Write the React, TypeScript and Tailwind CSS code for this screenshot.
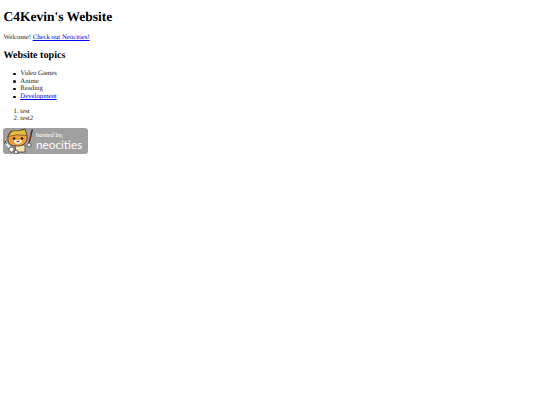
function NeocitiesBadge() {
  return (
    <a href="#" className="flex w-[85px] h-[25.5px] rounded-[3px] bg-[#a0a0a0] overflow-hidden">
      <svg width="33" height="26" viewBox="0 0 33 26" className="shrink-0">
        {/* paint brush */}
        <path d="M26 15 L28.5 5" stroke="#7a2a1c" strokeWidth="1.6" fill="none" />
        <path d="M28 6 L29.5 1.5" stroke="#333" strokeWidth="1.5" fill="none" />
        <circle cx="26" cy="17" r="2" fill="#f4f0e0" stroke="#333" strokeWidth="0.7" />
        {/* body */}
        <path d="M12 17 L22 17 L22 24 L13 24 Z" fill="#f3e3b0" stroke="#333" strokeWidth="0.7" />
        {/* head */}
        <path d="M5 8 L8 3 L12 4 L17 2.5 L22 1 L24 8 L24 12 Q22 18 14 18 Q6 18 5 13 Z" fill="#ee9f38" stroke="#333" strokeWidth="0.8" />
        {/* helmet */}
        <path d="M5 8.5 L9 3 L17 2.5 L22 1.5 L24 7.5 L14 6.8 Z" fill="#e8bd45" stroke="#4a3a1a" strokeWidth="0.6" />
        <path d="M11 14 Q14 18 19 14 L19 12 L11 12 Z" fill="#fbf3df" />
        <circle cx="11" cy="10.5" r="1.3" fill="#222" />
        <circle cx="19" cy="10.5" r="1.3" fill="#222" />
        <path d="M13.5 13 Q15 15 16.5 13" stroke="#222" strokeWidth="0.7" fill="#a33" />
        {/* wrench and paw */}
        <path d="M3 15 L8 21" stroke="#eee" strokeWidth="2" fill="none" />
        <path d="M1.5 13.5 L4 16 M3 12.8 L1.2 15.8" stroke="#333" strokeWidth="0.7" fill="none" />
        <circle cx="8.5" cy="21.5" r="2.6" fill="#f8f4e6" stroke="#333" strokeWidth="0.7" />
        <circle cx="13" cy="24" r="1.8" fill="#f8f4e6" stroke="#333" strokeWidth="0.7" />
      </svg>
      <div className="flex flex-col font-['Lato',sans-serif] text-white pt-[4px] -ml-[0.5px] whitespace-nowrap">
        <span className="text-[6px] leading-[7px]">hosted by,</span>
        <span className="text-[11.8px] leading-[12px]">neocities</span>
      </div>
    </a>
  );
}

const topics = ['Video Games', 'Anime', 'Reading'];

export default function App() {
  return (
    <div className="min-h-[405px] bg-white text-[#222] px-[3.4px] font-['Liberation_Serif',serif] text-[6.75px] leading-[7.7px] [text-rendering:geometricPrecision]">
      <h1 className="text-[13.5px] leading-[15.5px] font-bold text-black pt-[9px] mb-[9.2px]">C4Kevin's Website</h1>
      <p className="mb-[8.6px]">
        Welcome! <a href="#" className="text-[#0000ee] underline">Check out Neocities!</a>
      </p>
      <h2 className="text-[10.1px] leading-[11.6px] font-bold text-black mb-[8.4px]">Website topics</h2>
      <ul className="pl-[16.9px] mb-[6.8px]">
        {topics.map((topic) => (
          <li key={topic} className="flex items-center -ml-[7px] gap-[4.7px]">
            <span className="w-[2.3px] h-[2.3px] rounded-full bg-black" />
            {topic}
          </li>
        ))}
        <li className="flex items-center -ml-[7px] gap-[4.7px]">
          <span className="w-[2.3px] h-[2.3px] rounded-full bg-black" />
          <a href="#" className="text-[#0000ee] underline">Development</a>
        </li>
      </ul>
      <ol className="list-decimal pl-[16.9px] mb-[5.4px]">
        <li>test</li>
        <li>test2</li>
      </ol>
      <NeocitiesBadge />
    </div>
  );
}
